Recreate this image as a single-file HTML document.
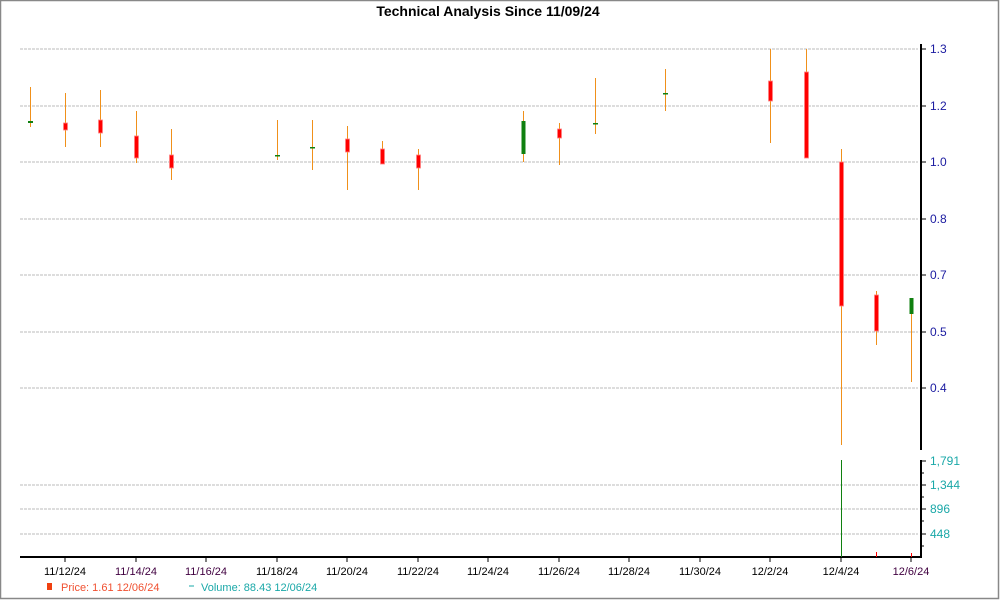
<!DOCTYPE html>
<html><head><meta charset="utf-8"><style>
html,body{margin:0;padding:0;background:#fff;}
svg{display:block;font-family:"Liberation Sans",sans-serif;}
</style></head><body>
<svg width="1000" height="600" viewBox="0 0 1000 600" xmlns="http://www.w3.org/2000/svg">
<rect x="0.5" y="0.5" width="998" height="598" fill="#fff" stroke="#888" stroke-width="1.5"/>
<text x="488" y="16" text-anchor="middle" font-size="14" font-weight="bold" fill="#000">Technical Analysis Since 11/09/24</text>
<g stroke="#bbb" stroke-dasharray="3,1" stroke-width="1">
<line x1="20" y1="49" x2="918" y2="49"/><line x1="20" y1="106" x2="918" y2="106"/>
<line x1="20" y1="162" x2="918" y2="162"/><line x1="20" y1="219" x2="918" y2="219"/>
<line x1="20" y1="275" x2="918" y2="275"/><line x1="20" y1="332" x2="918" y2="332"/>
<line x1="20" y1="388" x2="918" y2="388"/>
<line x1="20" y1="485" x2="918" y2="485"/><line x1="20" y1="509" x2="918" y2="509"/>
<line x1="20" y1="534" x2="918" y2="534"/>
</g>
<g stroke="#000" stroke-width="2"><line x1="921" y1="44" x2="921" y2="450"/><line x1="921" y1="460" x2="921" y2="557"/><line x1="20" y1="557" x2="922" y2="557"/></g>
<g stroke="#000" stroke-width="1">
<line x1="921" y1="49" x2="926" y2="49"/><line x1="921" y1="106" x2="926" y2="106"/><line x1="921" y1="162" x2="926" y2="162"/><line x1="921" y1="219" x2="926" y2="219"/><line x1="921" y1="275" x2="926" y2="275"/><line x1="921" y1="332" x2="926" y2="332"/><line x1="921" y1="388" x2="926" y2="388"/>
<line x1="921" y1="461" x2="926" y2="461"/><line x1="921" y1="485" x2="926" y2="485"/><line x1="921" y1="509" x2="926" y2="509"/><line x1="921" y1="534" x2="926" y2="534"/>
<line x1="921" y1="473" x2="924" y2="473"/><line x1="921" y1="497" x2="924" y2="497"/><line x1="921" y1="521" x2="924" y2="521"/><line x1="921" y1="546" x2="924" y2="546"/>
</g>
<g font-size="12" fill="#1a1aa0">
<text x="930" y="53">1.3</text><text x="930" y="110">1.2</text><text x="930" y="166">1.0</text><text x="930" y="223">0.8</text><text x="930" y="279">0.7</text><text x="930" y="336">0.5</text><text x="930" y="392">0.4</text>
</g>
<g font-size="12" fill="#1aa8a8">
<text x="930" y="465">1,791</text><text x="930" y="489">1,344</text><text x="930" y="513">896</text><text x="930" y="538">448</text>
</g>
<g stroke="#000"><line x1="65" y1="557" x2="65" y2="562"/><line x1="136" y1="557" x2="136" y2="562"/><line x1="206" y1="557" x2="206" y2="562"/><line x1="277" y1="557" x2="277" y2="562"/><line x1="347" y1="557" x2="347" y2="562"/><line x1="418" y1="557" x2="418" y2="562"/><line x1="488" y1="557" x2="488" y2="562"/><line x1="559" y1="557" x2="559" y2="562"/><line x1="629" y1="557" x2="629" y2="562"/><line x1="700" y1="557" x2="700" y2="562"/><line x1="770" y1="557" x2="770" y2="562"/><line x1="841" y1="557" x2="841" y2="562"/><line x1="911" y1="557" x2="911" y2="562"/></g>
<g font-size="11" fill="#000" text-anchor="middle">
<text x="65" y="575">11/12/24</text><text x="136" y="575" fill="#400040">11/14/24</text><text x="206" y="575" fill="#400040">11/16/24</text><text x="277" y="575">11/18/24</text><text x="347" y="575">11/20/24</text><text x="418" y="575">11/22/24</text><text x="488" y="575">11/24/24</text><text x="559" y="575">11/26/24</text><text x="629" y="575">11/28/24</text><text x="700" y="575">11/30/24</text><text x="770" y="575">12/2/24</text><text x="841" y="575">12/4/24</text><text x="911" y="575" fill="#400040">12/6/24</text>
</g>
<rect x="47" y="583" width="5" height="7" fill="#f04010"/>
<text x="61" y="591" font-size="11" fill="#f05030">Price: 1.61  12/06/24</text>
<line x1="189" y1="586" x2="194" y2="586" stroke="#1aa8a8"/>
<text x="201" y="591" font-size="11" fill="#1aa8a8">Volume: 88.43  12/06/24</text>
<g stroke="#f0901a" stroke-width="1">
<line x1="30.5" y1="87" x2="30.5" y2="127"/><line x1="65.5" y1="93" x2="65.5" y2="147"/><line x1="100.5" y1="90" x2="100.5" y2="147"/><line x1="136.5" y1="111" x2="136.5" y2="163"/><line x1="171.5" y1="129" x2="171.5" y2="180"/>
<line x1="277.5" y1="120" x2="277.5" y2="160"/><line x1="312.5" y1="120" x2="312.5" y2="170"/><line x1="347.5" y1="126" x2="347.5" y2="190"/><line x1="382.5" y1="141" x2="382.5" y2="164"/><line x1="418.5" y1="149" x2="418.5" y2="190"/>
<line x1="523.5" y1="111" x2="523.5" y2="162"/><line x1="559.5" y1="123" x2="559.5" y2="165"/><line x1="595.5" y1="78" x2="595.5" y2="134"/><line x1="665.5" y1="69" x2="665.5" y2="111"/>
<line x1="770.5" y1="49" x2="770.5" y2="143"/><line x1="806.5" y1="49" x2="806.5" y2="158"/><line x1="841.5" y1="149" x2="841.5" y2="445"/><line x1="876.5" y1="291" x2="876.5" y2="345"/><line x1="911.5" y1="298" x2="911.5" y2="382"/>
</g>
<g fill="#ff0000" stroke="#ff8080" stroke-width="0.8">
<rect x="63.5" y="123" width="4" height="7"/><rect x="98.5" y="120" width="4" height="13"/><rect x="134.5" y="136" width="4" height="22"/><rect x="169.5" y="155" width="4" height="13"/>
<rect x="345.5" y="139" width="4" height="13"/><rect x="380.5" y="149" width="4" height="15"/><rect x="416.5" y="155" width="4" height="13"/><rect x="557.5" y="129" width="4" height="9"/>
<rect x="768.5" y="81" width="4" height="20"/><rect x="804.5" y="72" width="4" height="86"/><rect x="839.5" y="162" width="4" height="144"/><rect x="874.5" y="295" width="4" height="36"/>
</g>
<g fill="#108010">
<rect x="521.5" y="121" width="4" height="33"/><rect x="909.5" y="298" width="4" height="16"/>
<rect x="28" y="121" width="5" height="2"/><rect x="275" y="155" width="5" height="1.5"/><rect x="310" y="147" width="5" height="1.5"/><rect x="593" y="123" width="5" height="1.5"/><rect x="663" y="93" width="5" height="1.5"/>
</g>
<line x1="841.5" y1="460" x2="841.5" y2="557" stroke="#108010"/>
<line x1="876.5" y1="552" x2="876.5" y2="557" stroke="#ff0000"/>
<line x1="911.5" y1="553" x2="911.5" y2="557" stroke="#ff0000"/>
</svg>
</body></html>
